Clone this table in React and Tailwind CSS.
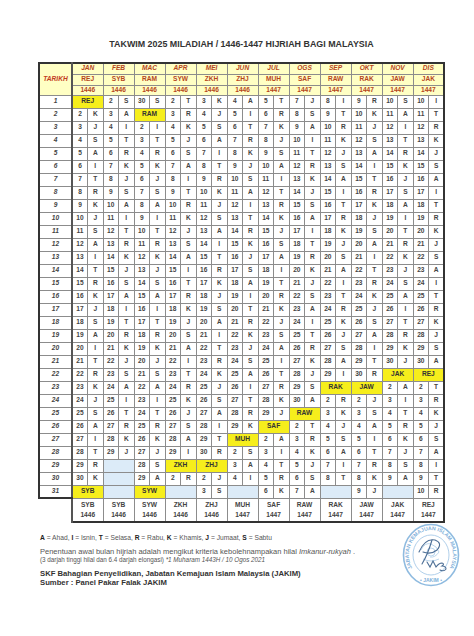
import React from "react";

const MONTHS = [
  { g: "JAN", h: "REJ", y: 1446, days: 31, first: 1, starts: { 1: "REJ", 31: "SYB" }, end: "SYB", endY: 1446 },
  { g: "FEB", h: "SYB", y: 1446, days: 28, first: 2, starts: {}, end: "SYB", endY: 1446 },
  { g: "MAC", h: "RAM", y: 1446, days: 31, first: 30, starts: { 2: "RAM", 31: "SYW" }, end: "SYW", endY: 1446 },
  { g: "APR", h: "SYW", y: 1446, days: 30, first: 2, starts: { 29: "ZKH" }, end: "ZKH", endY: 1446 },
  { g: "MEI", h: "ZKH", y: 1446, days: 31, first: 3, starts: { 29: "ZHJ" }, end: "ZHJ", endY: 1446 },
  { g: "JUN", h: "ZHJ", y: 1446, days: 30, first: 4, starts: { 27: "MUH" }, end: "MUH", endY: 1447 },
  { g: "JUL", h: "MUH", y: 1447, days: 31, first: 5, starts: { 26: "SAF" }, end: "SAF", endY: 1447 },
  { g: "OGS", h: "SAF", y: 1447, days: 31, first: 7, starts: { 25: "RAW" }, end: "RAW", endY: 1447 },
  { g: "SEP", h: "RAW", y: 1447, days: 30, first: 8, starts: { 23: "RAK" }, end: "RAK", endY: 1447 },
  { g: "OKT", h: "RAK", y: 1447, days: 31, first: 9, starts: { 23: "JAW" }, end: "JAW", endY: 1447 },
  { g: "NOV", h: "JAW", y: 1447, days: 30, first: 10, starts: { 22: "JAK" }, end: "JAK", endY: 1447 },
  { g: "DIS", h: "JAK", y: 1447, days: 31, first: 10, starts: { 22: "REJ" }, end: "REJ", endY: 1447 },
];

const DAYS = ["A", "I", "T", "R", "K", "J", "S"];

// one list of 31 cells per month
const grid = MONTHS.map((m, mi) => {
  let n = m.first;
  const out = [];
  for (let d = 1; d <= 31; d++) {
    if (d > m.days) {
      out.push({ blank: true });
      continue;
    }
    if (m.starts[d]) n = 1;
    if (m.starts[d]) out.push({ start: m.starts[d] });
    else out.push({ n, w: DAYS[new Date(2025, mi, d).getDay()] });
    n++;
  }
  return out;
});

const line = "border border-[#8c8c8c]";

const Stamp = () => (
  <svg width="58" height="64" viewBox="0 0 58 64" className="shrink-0">
    <defs>
      <path id="arcTop" d="M 14.9 51.2 A 22 25 0 1 1 43.1 51.2" />
    </defs>
    <ellipse cx="29" cy="32" rx="27.5" ry="30.5" fill="none" stroke="#8fbbe0" strokeWidth="1.6" />
    <ellipse cx="29" cy="32" rx="18" ry="20" fill="none" stroke="#9cc3e4" strokeWidth="0.8" />
    <text fontSize="5.2" fill="#7fb0da" fontFamily="Liberation Sans, Arial, sans-serif" fontWeight="700">
      <textPath href="#arcTop" startOffset="50%" textAnchor="middle">JABATAN KEMAJUAN ISLAM MALAYSIA</textPath>
    </text>
    <text x="29" y="58.5" fontSize="5" fill="#7fb0da" textAnchor="middle" fontFamily="Liberation Sans, Arial, sans-serif" fontWeight="700">
      • JAKIM •
    </text>
    <g fill="none" stroke="#a9cbe8" strokeWidth="0.8">
      <path d="M 19 27 q 4 -8 10 -6 q 6 2 8 8 q -4 6 -9 5" />
      <path d="M 21 36 q 8 4 16 0" />
      <circle cx="29" cy="29" r="4" />
    </g>
    <g fill="none" stroke="#4d6f96" strokeWidth="1.1" strokeLinecap="round">
      <path d="M 17 29 q 6 -14 16 -12 q 8 3 2 10 q -6 5 -14 2" />
      <path d="M 30 17 q -4 14 -10 24" />
      <path d="M 25 39 l 3 5 l 3 -6 l 3 6 q 3 -4 6 -4 q 3 1 0 3 q 4 0 4 3 q -2 3 -6 1" />
    </g>
  </svg>
);

export default function App() {
  return (
    <div className="w-[474px] h-[636px] bg-white font-['Liberation_Sans',Arial,sans-serif] text-[#444] overflow-hidden">
      <div className="ml-[38px] w-[407px] pt-[38px]">
        <h1 className="text-center text-[8.9px] leading-[12px] font-bold text-[#333] mb-[12px]">
          TAKWIM 2025 MILADIAH / 1446-1447 HIJRIAH BAGI MALAYSIA
        </h1>

        <table className="table-fixed border-collapse w-[405px] text-[6.6px] font-bold leading-none text-center">
          <colgroup>
            <col className="w-[33px]" />
            {MONTHS.map((m) => (
              <React.Fragment key={m.g}>
                <col className="w-[15.5px]" />
                <col className="w-[15.5px]" />
              </React.Fragment>
            ))}
          </colgroup>
          <thead className="bg-[#ffffc4] text-[#b5461d]">
            <tr className="h-[11px]">
              <th rowSpan={3} className={`${line} border-l-2 border-t-2 border-r-2 border-l-[#333] border-t-[#333] border-r-[#555] italic text-[#c23b22] p-0`}>
                TARIKH
              </th>
              {MONTHS.map((m, i) => (
                <th key={m.g} colSpan={2} className={`${line} border-t-2 border-t-[#333] italic p-0 ${i === 11 ? "border-r-2 border-r-[#333]" : ""}`}>
                  {m.g}
                </th>
              ))}
            </tr>
            <tr className="h-[11px]">
              {MONTHS.map((m, i) => (
                <th key={m.g} colSpan={2} className={`${line} p-0 ${i === 11 ? "border-r-2 border-r-[#333]" : ""}`}>
                  {m.h}
                </th>
              ))}
            </tr>
            <tr className="h-[10px]">
              {MONTHS.map((m, i) => (
                <th key={m.g} colSpan={2} className={`${line} p-0 ${i === 11 ? "border-r-2 border-r-[#333]" : ""}`}>
                  {m.y}
                </th>
              ))}
            </tr>
          </thead>
          <tbody>
            {Array.from({ length: 31 }, (_, r) => (
              <tr key={r} className="h-[13px]">
                <td className={`${line} border-l-2 border-r-2 border-l-[#333] border-r-[#555] italic p-0 ${r === 30 ? "border-b-2 border-b-[#333]" : ""}`}>
                  {r + 1}
                </td>
                {grid.map((col, mi) => {
                  const c = col[r];
                  const edge = mi === 11 ? "border-r-2 border-r-[#333]" : "";
                  if (c.blank)
                    return <td key={mi} colSpan={2} className={`${line} bg-[#dcebf8] ${edge}`} />;
                  if (c.start)
                    return (
                      <td key={mi} colSpan={2} className={`${line} bg-[#f6ee1c] text-[#333] p-0 ${edge}`}>
                        {c.start}
                      </td>
                    );
                  return (
                    <React.Fragment key={mi}>
                      <td className={`${line} p-0`}>{c.n}</td>
                      <td className={`${line} p-0 ${edge}`}>{c.w}</td>
                    </React.Fragment>
                  );
                })}
              </tr>
            ))}
            <tr className="h-[24px]">
              <td className="p-0 border-r-2 border-r-[#555]" />
              {MONTHS.map((m, i) => (
                <td key={m.g} colSpan={2} className={`${line} border-b-2 border-b-[#333] p-0 leading-[10px] ${i === 11 ? "border-r-2 border-r-[#333]" : ""}`}>
                  <div>{m.end}</div>
                  <div>{m.endY}</div>
                </td>
              ))}
            </tr>
          </tbody>
        </table>
      </div>

      <div className="flex ml-[40px] w-[420px] justify-between items-start">
        <div className="pt-[11px] text-[#555]">
          <p className="text-[6.7px] leading-[8px]">
            <b className="text-[#222]">A</b> = Ahad, <b className="text-[#222]">I</b> = Isnin, <b className="text-[#222]">T</b> = Selasa,{" "}
            <b className="text-[#222]">R</b> = Rabu, <b className="text-[#222]">K</b> = Khamis, <b className="text-[#222]">J</b> = Jumaat,{" "}
            <b className="text-[#222]">S</b> = Sabtu
          </p>
          <p className="text-[7.5px] leading-[9px] mt-[5px]">
            Penentuan awal bulan hijriah adalah mengikut kriteria kebolehnampakan hilal <i>Imkanur-rukyah</i> .
          </p>
          <p className="text-[6.3px] leading-[8px]">
            (3 darjah tinggi hilal dan 6.4 darjah elongasi) <i>*1 Muharam 1443H / 10 Ogos 2021</i>
          </p>
          <p className="text-[7.7px] leading-[9px] font-bold text-[#333] mt-[5px]">
            SKF Bahagian Penyelidikan, Jabatan Kemajuan Islam Malaysia (JAKIM)
          </p>
          <p className="text-[7.7px] leading-[9px] font-bold text-[#333]">Sumber : Panel Pakar Falak JAKIM</p>
        </div>
        <Stamp />
      </div>
    </div>
  );
}
